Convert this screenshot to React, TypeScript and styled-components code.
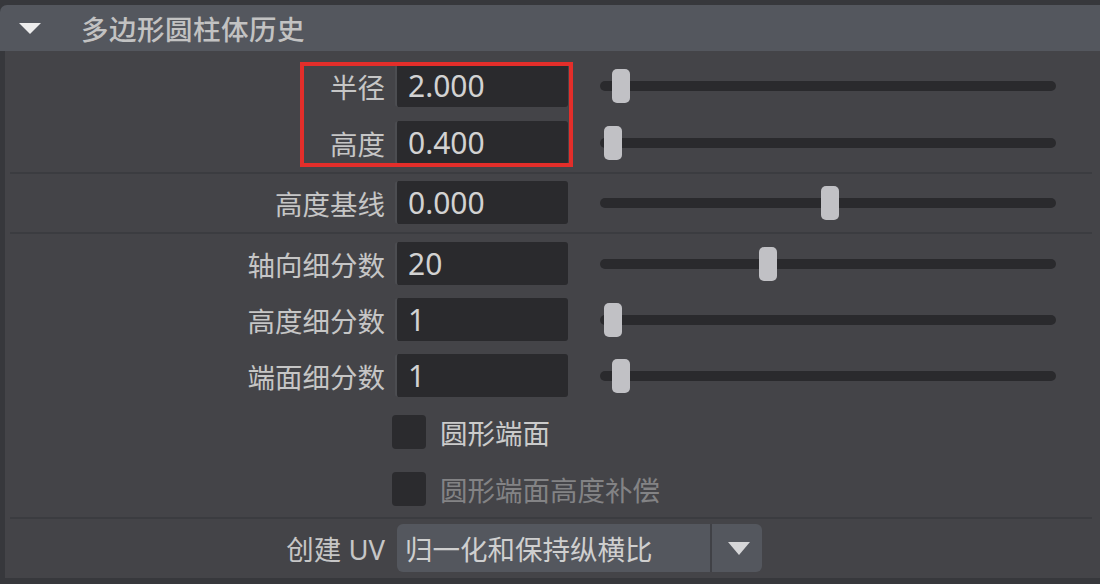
import React from 'react';
import styled, { createGlobalStyle } from 'styled-components';

/*
 * Styles
 */
const GlobalStyle = createGlobalStyle`
  html, body {
    margin: 0;
    padding: 0;
    background: #3a3b3f;
  }
  body {
    width: 1100px;
    height: 584px;
    overflow: hidden;
    font-family: "Noto Sans", "Noto Sans CJK SC", sans-serif;
  }
`;

const Frame = styled.div`
  width: 1100px;
  height: 584px;
  box-sizing: border-box;
  padding-top: 5px;
  background: #37383c;
  display: flex;
  flex-direction: column;
`;

const Header = styled.div`
  height: 46px;
  flex: none;
  background: #54575e;
  border-radius: 7px 0 0 0;
  display: flex;
  align-items: center;
  padding-left: 19px;
  gap: 40px;
`;

const HeaderArrow = styled.div`
  width: 0;
  height: 0;
  border-left: 11.5px solid transparent;
  border-right: 11.5px solid transparent;
  border-top: 11px solid #ececec;
  margin-top: 1px;
`;

const Title = styled.span`
  font-family: "Noto Sans CJK SC", sans-serif;
  font-size: 27.5px;
  font-weight: 500;
  color: #c2c2c2;
  letter-spacing: 0.5px;
`;

const Body = styled.div`
  margin-left: 5px;
  height: 527px;
  flex: none;
  background: #444448;
  display: flex;
  flex-direction: column;
`;

const Section = styled.div<{ $top: number; $bottom: number; $gap?: number }>`
  position: relative;
  display: flex;
  flex-direction: column;
  gap: ${(p) => p.$gap ?? 13}px;
  padding-top: ${(p) => p.$top}px;
  padding-bottom: ${(p) => p.$bottom}px;
`;

const Separator = styled.div`
  height: 2px;
  margin: 0 8px 0 5px;
  background: #3b3c40;
`;

const Row = styled.div<{ $height?: number }>`
  display: grid;
  grid-template-columns: 390px 173px 488px;
  align-items: center;
  height: ${(p) => p.$height ?? 44}px;
`;

const Label = styled.div`
  text-align: right;
  padding-right: 10px;
  font-size: 27.5px;
  color: #c6c6c6;
  white-space: nowrap;
`;

const Field = styled.div`
  height: 100%;
  box-sizing: border-box;
  background: #2a2a2d;
  border-radius: 3px;
  border-left: 2px solid #4c4d51;
  padding-left: 11px;
  display: flex;
  align-items: center;
  font-size: 30px;
  color: #d2d2d2;
`;

const Track = styled.div`
  position: relative;
  margin-left: 32px;
  height: 10px;
  border-radius: 5px;
  background: #2a2a2d;
`;

const Thumb = styled.div`
  position: absolute;
  top: 50%;
  width: 18px;
  height: 34px;
  transform: translateY(-50%);
  border-radius: 5px;
  background: #c1c1c5;
`;

const CheckCell = styled.div`
  grid-column: 2 / -1;
  display: flex;
  align-items: center;
  gap: 14px;
  margin-left: -3px;
`;

const Box = styled.div`
  width: 34px;
  height: 34px;
  border-radius: 4px;
  background: #2b2b2e;
`;

const CheckText = styled.span<{ $disabled?: boolean }>`
  font-size: 27.5px;
  color: ${(p) => (p.$disabled ? '#838385' : '#cbcbcb')};
`;

const Highlight = styled.div`
  position: absolute;
  left: 295px;
  top: 11px;
  width: 273px;
  height: 105px;
  box-sizing: border-box;
  border: 4px solid #e32e2a;
  pointer-events: none;
`;

const Dropdown = styled.div`
  grid-column: 2 / -1;
  margin-left: 2px;
  width: 365px;
  height: 48px;
  display: flex;
  border-radius: 6px;
  overflow: hidden;
  background: #54575e;
`;

const DropdownValue = styled.div`
  flex: 1;
  display: flex;
  align-items: center;
  padding-left: 8px;
  font-size: 27.5px;
  color: #cfcfcf;
  border-right: 2px solid #404146;
`;

const DropdownButton = styled.div`
  width: 50px;
  display: flex;
  align-items: center;
  justify-content: center;
`;

const DropdownArrow = styled.div`
  width: 0;
  height: 0;
  border-left: 11.5px solid transparent;
  border-right: 11.5px solid transparent;
  border-top: 13px solid #d6d6d8;
  margin-left: 4px;
`;

/*
 * Data
 */
const TRACK_RANGE = 456 - 18;

type SliderRow = { label: string; value: string; pos: number };

const topRows: SliderRow[] = [
  { label: '半径', value: '2.000', pos: 0.027 },
  { label: '高度', value: '0.400', pos: 0.009 },
];

const baseRow: SliderRow = { label: '高度基线', value: '0.000', pos: 0.505 };

const divRows: SliderRow[] = [
  { label: '轴向细分数', value: '20', pos: 0.363 },
  { label: '高度细分数', value: '1', pos: 0.009 },
  { label: '端面细分数', value: '1', pos: 0.027 },
];

/*
 * Components
 */
const SliderField = ({ label, value, pos }: SliderRow) => (
  <Row $height={43}>
    <Label>{label}</Label>
    <Field>{value}</Field>
    <Track>
      <Thumb style={{ left: `${Math.round(pos * TRACK_RANGE)}px` }} />
    </Track>
  </Row>
);

const CheckRow = ({ text, disabled }: { text: string; disabled?: boolean }) => (
  <Row>
    <div />
    <CheckCell>
      <Box />
      <CheckText $disabled={disabled}>{text}</CheckText>
    </CheckCell>
  </Row>
);

export default function App() {
  return (
    <>
      <GlobalStyle />
      <Frame>
        <Header>
          <HeaderArrow />
          <Title>多边形圆柱体历史</Title>
        </Header>
        <Body>
          <Section $top={13} $bottom={8} $gap={14}>
            {topRows.map((r) => <SliderField key={r.label} {...r} />)}
            <Highlight />
          </Section>
          <Separator />
          <Section $top={7} $bottom={8}>
            <SliderField {...baseRow} />
          </Section>
          <Separator />
          <Section $top={8} $bottom={6}>
            {divRows.map((r) => <SliderField key={r.label} {...r} />)}
            <CheckRow text="圆形端面" />
            <CheckRow text="圆形端面高度补偿" disabled />
          </Section>
          <Separator />
          <Section $top={5} $bottom={2}>
            <Row $height={48}>
              <Label>创建 UV</Label>
              <Dropdown>
                <DropdownValue>归一化和保持纵横比</DropdownValue>
                <DropdownButton>
                  <DropdownArrow />
                </DropdownButton>
              </Dropdown>
            </Row>
          </Section>
        </Body>
      </Frame>
    </>
  );
}
